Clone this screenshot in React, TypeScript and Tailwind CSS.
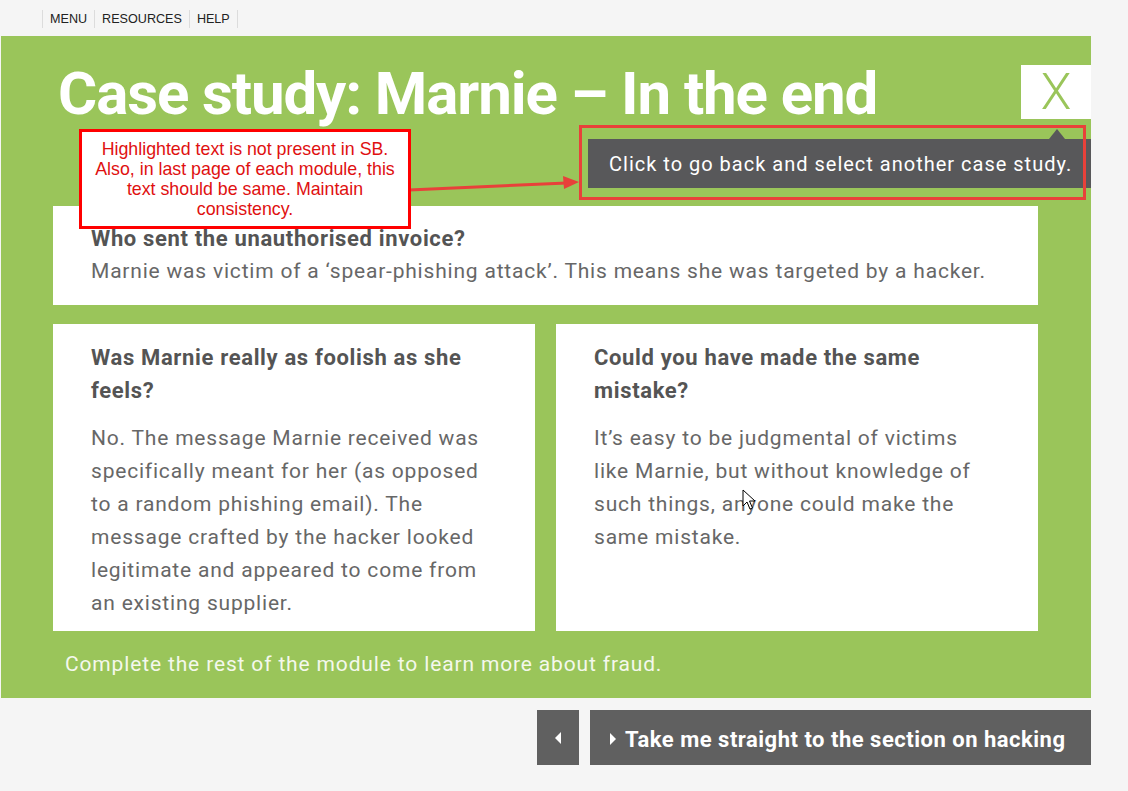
import React from "react";

const din = { fontFamily: "Roboto, 'DejaVu Sans', sans-serif" };

const NavBar = () => {
  const items = ["MENU", "RESOURCES", "HELP"];
  return (
    <div className="h-[36px] flex items-center pl-[42px] pt-[2px]" style={{ fontFamily: "'Liberation Sans', Arial, sans-serif" }}>
      {items.map((item, i) => (
        <div
          key={item}
          className={`h-[18px] flex items-center px-[7px] text-[12.6px] text-[#222] border-r border-[#dcdcdc] ${i === 0 ? "border-l" : ""}`}
        >
          {item}
        </div>
      ))}
    </div>
  );
};

const Card = ({ title, body, className }: { title: React.ReactNode; body: React.ReactNode; className?: string }) => (
  <div className={`bg-white pl-[38px] pr-[40px] ${className ?? ""}`}>
    <h3 className="text-[22px] leading-[33px] font-bold text-[#545454] tracking-[0.65px]">{title}</h3>
    <p className="text-[21px] leading-[33px] text-[#676767] tracking-[0.8px]">{body}</p>
  </div>
);

const Cursor = () => (
  <svg className="absolute left-[742px] top-[489px]" width="14" height="22" viewBox="0 0 14 22">
    <path d="M1 1 L1 17 L5 13 L8 20 L10.5 19 L7.5 12 L13 12 Z" fill="white" stroke="black" strokeWidth="1" strokeLinejoin="round" />
  </svg>
);

export default function App() {
  return (
    <div className="w-[1128px] h-[791px] bg-[#f5f5f5] relative overflow-hidden" style={din}>
      <NavBar />

      <div className="ml-px w-[1090px] h-[662px] bg-[#9ac55a] relative pt-[28px]">
        <div className="flex items-start">
          <h1 className="ml-[57px] text-[60px] leading-[60px] font-bold text-white tracking-[-1.1px] flex-1">
            Case study: Marnie – In the end
          </h1>
          <button className="mt-[1px] w-[70px] h-[54px] bg-white flex items-center justify-center text-[#9ac55a] text-[50px] font-light leading-none">
            X
          </button>
        </div>

        <div className="mt-[82px] ml-[52px] w-[985px] flex flex-col gap-[19px]">
          <Card
            className="pt-[16px] pb-[17px] h-[99px]"
            title="Who sent the unauthorised invoice?"
            body="Marnie was victim of a ‘spear-phishing attack’. This means she was targeted by a hacker."
          />
          <div className="flex gap-[21px] h-[307px]">
            <Card
              className="w-[482px] pt-[17px] pr-[50px]"
              title="Was Marnie really as foolish as she feels?"
              body={
                <span className="block mt-[15px]">
                  No. The message Marnie received was specifically meant for her (as opposed to a random phishing email). The message crafted by the hacker looked legitimate and appeared to come from an existing supplier.
                </span>
              }
            />
            <Card
              className="w-[482px] pt-[17px] pr-[50px]"
              title="Could you have made the same mistake?"
              body={
                <span className="block mt-[15px] pr-[10px]">
                  It’s easy to be judgmental of victims like Marnie, but without knowledge of such things, anyone could make the same mistake.
                </span>
              }
            />
          </div>
        </div>

        <p className="ml-[64px] h-[67px] flex items-center text-[21px] text-[#f4f8ec] tracking-[0.85px]">
          Complete the rest of the module to learn more about fraud.
        </p>

        {/* tooltip */}
        <div className="absolute left-[587px] top-[103px] w-[503px] h-[49px] bg-[#58585a] flex items-center pl-[21px] text-white text-[20px] tracking-[1px]">
          Click to go back and select another case study.
          <span className="absolute right-[26px] -top-[10px] w-0 h-0 border-l-[8px] border-r-[8px] border-b-[10px] border-l-transparent border-r-transparent border-b-[#58585a]" />
        </div>
      </div>

      <div className="flex justify-end gap-[11px] w-[1091px] mt-[12px]">
        <button className="w-[42px] h-[55px] bg-[#606060] flex items-center justify-center">
          <span className="w-0 h-0 border-t-[6px] border-b-[6px] border-r-[6px] border-t-transparent border-b-transparent border-r-white" />
        </button>
        <button className="w-[501px] h-[55px] bg-[#606060] flex items-center pl-[20px] pt-[3px] gap-[9px] text-white text-[22px] font-bold tracking-[0.5px]">
          <span className="w-0 h-0 border-t-[6px] border-b-[6px] border-l-[6px] border-t-transparent border-b-transparent border-l-white" />
          Take me straight to the section on hacking
        </button>
      </div>

      {/* review annotations */}
      <div className="absolute left-[579px] top-[125px] w-[507px] h-[75px] border-[3px] border-[#e8413a]" />
      <svg className="absolute left-[405px] top-[172px]" width="180" height="24" viewBox="0 0 180 24">
        <line x1="4" y1="18" x2="162" y2="11" stroke="#e8413a" strokeWidth="3" />
        <polygon points="174,10 158,4 159,17" fill="#e8413a" />
      </svg>
      <div
        className="absolute left-[79px] top-[129px] w-[332px] h-[100px] bg-white border-[3px] border-[#ff0000] flex items-center justify-center text-center text-[17.8px] leading-[20px] text-[#e01010]"
        style={{ fontFamily: "'Liberation Sans', Arial, sans-serif" }}
      >
        <p>
          Highlighted text is not present in SB.
          <br />
          Also, in last page of each module, this
          <br />
          text should be same. Maintain
          <br />
          consistency.
        </p>
      </div>

      <Cursor />
    </div>
  );
}
